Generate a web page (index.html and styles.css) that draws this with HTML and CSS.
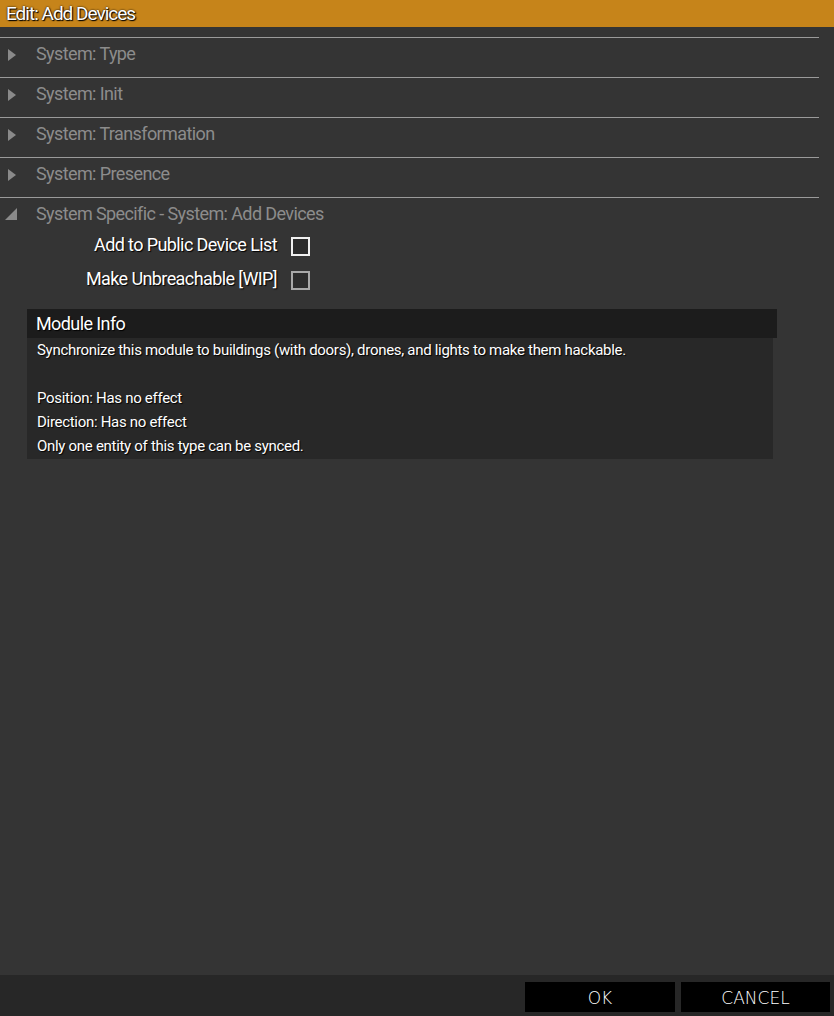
FILE: index.html
```html
<!DOCTYPE html>
<html>
<head>
<meta charset="utf-8">
<link rel="stylesheet" href="styles.css">
</head>
<body>
<div class="dialog">
  <div class="titlebar"><span class="title">Edit: Add Devices</span></div>
  <div class="content">
    <div class="section">
      <div class="sep"></div>
      <div class="row"><span class="arrow right"></span><span class="label">System: Type</span></div>
    </div>
    <div class="section">
      <div class="sep"></div>
      <div class="row"><span class="arrow right"></span><span class="label">System: Init</span></div>
    </div>
    <div class="section">
      <div class="sep"></div>
      <div class="row"><span class="arrow right"></span><span class="label">System: Transformation</span></div>
    </div>
    <div class="section">
      <div class="sep"></div>
      <div class="row"><span class="arrow right"></span><span class="label">System: Presence</span></div>
    </div>
    <div class="section">
      <div class="sep"></div>
      <div class="row"><span class="arrow open"></span><span class="label">System Specific - System: Add Devices</span></div>
      <div class="options">
        <div class="opt"><span class="optlabel">Add to Public Device List</span><span class="check"></span></div>
        <div class="opt"><span class="optlabel">Make Unbreachable [WIP]</span><span class="check dim"></span></div>
      </div>
    </div>
    <div class="info">
      <div class="info-head">Module Info</div>
      <div class="info-body">
        <p>Synchronize this module to buildings (with doors), drones, and lights to make them hackable.</p>
        <p class="blank">&nbsp;</p>
        <p>Position: Has no effect</p>
        <p>Direction: Has no effect</p>
        <p>Only one entity of this type can be synced.</p>
      </div>
    </div>
  </div>
  <div class="footer">
    <button class="btn ok">OK</button>
    <button class="btn cancel">CANCEL</button>
  </div>
</div>
</body>
</html>
```
FILE: styles.css
```css
* { box-sizing: border-box; }
html, body { margin: 0; padding: 0; }
body {
  width: 834px;
  height: 1016px;
  background: #343434;
  font-family: "Roboto", "Liberation Sans", sans-serif;
  overflow: hidden;
}
.dialog {
  width: 834px;
  height: 1016px;
  display: flex;
  flex-direction: column;
}
.titlebar {
  height: 27px;
  background: #c6841a;
  padding-left: 6px;
  display: flex;
  align-items: center;
}
.title {
  color: #fff;
  font-size: 19px;
  letter-spacing: -1px;
  text-shadow: 1px 1px 1px #000, 0 0 2px #000;
}
.content {
  flex: 1;
  padding-top: 10px;
}
.sep {
  width: 819px;
  height: 1px;
  background: #9a9a9a;
}
.row {
  height: 39px;
  display: flex;
  align-items: flex-start;
  padding-top: 5px;
}
.arrow {
  width: 36px;
  display: inline-block;
  position: relative;
  height: 20px;
}
.arrow.right::before {
  content: "";
  position: absolute;
  left: 8px;
  top: 6px;
  border-left: 8px solid #8a8a8a;
  border-top: 6px solid transparent;
  border-bottom: 6px solid transparent;
}
.arrow.open::before {
  content: "";
  position: absolute;
  left: 5px;
  top: 5px;
  border-bottom: 12px solid #8a8a8a;
  border-left: 12px solid transparent;
}
.label {
  color: #8c8c8c;
  font-size: 18px;
  line-height: 22px;
  letter-spacing: -0.6px;
}
.options {
  display: flex;
  flex-direction: column;
  gap: 16px;
  width: 310px;
}
.opt {
  display: flex;
  justify-content: flex-end;
  align-items: center;
  gap: 14px;
  height: 18px;
}
.optlabel {
  color: #fff;
  font-size: 18px;
  letter-spacing: -0.6px;
  text-shadow: 1px 1px 1px #000;
  position: relative;
  top: -2px;
}
.check {
  width: 19px;
  height: 19px;
  border: 2px solid #f0f0f0;
  background: #2c2c2c;
  flex: none;
}
.check.dim { border-color: #a8a8a8; }
.info {
  margin-top: 20px;
  margin-left: 27px;
  width: 750px;
}
.info-head {
  height: 29px;
  background: #1c1c1c;
  color: #fff;
  font-size: 18px;
  letter-spacing: -0.6px;
  padding-left: 9px;
  padding-bottom: 1px;
  display: flex;
  align-items: center;
  text-shadow: 1px 1px 1px #000;
}
.info-body {
  width: 746px;
  background: #282828;
  padding: 0 0 1px 10px;
  color: #fff;
  font-size: 15px;
  letter-spacing: -0.3px;
}
.info-body p {
  margin: 0;
  height: 24px;
  line-height: 24px;
  text-shadow: 1px 1px 1px #000;
}
.footer {
  height: 41px;
  background: #272727;
  display: flex;
  justify-content: flex-end;
  align-items: flex-start;
  padding-top: 7px;
  padding-right: 4px;
  gap: 6px;
}
.btn {
  width: 150px;
  height: 30px;
  background: #000;
  border: none;
  color: #fff;
  font-family: "DejaVu Sans", sans-serif;
  font-size: 17px;
  font-weight: 200;
  padding: 2px 0 0 0;
  letter-spacing: 0;
}
.btn.cancel { width: 149px; }
```
